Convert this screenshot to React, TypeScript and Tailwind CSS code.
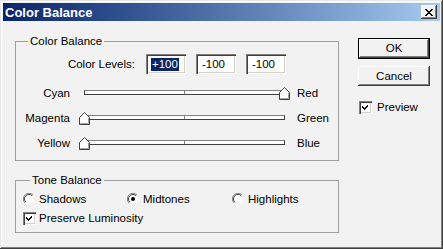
import type { ReactNode } from "react";

const FONT = "font-['Liberation_Sans',Arial,sans-serif]";

// ── small classic-windows widgets ───────────────────────────────────────────
function CloseGlyph() {
  return (
    <svg width="8" height="7" viewBox="0 0 8 7" shapeRendering="crispEdges">
      <path d="M0 0h2v1h-2zM6 0h2v1h-2zM1 1h2v1h-2zM5 1h2v1h-2zM2 2h4v1h-4zM3 3h2v1h-2zM2 4h4v1h-4zM1 5h2v1h-2zM5 5h2v1h-2zM0 6h2v1h-2zM6 6h2v1h-2z" fill="#000" />
    </svg>
  );
}

function Radio({ checked }: { checked?: boolean }) {
  return (
    <svg width="12" height="12" viewBox="0 0 12 12" className="shrink-0">
      <circle cx="6" cy="6" r="5" fill="#fff" />
      <path d="M10 2 A5.5 5.5 0 0 0 2 10" fill="none" stroke="#808080" strokeWidth="1" />
      <path d="M9.2 2.8 A4.5 4.5 0 0 0 2.8 9.2" fill="none" stroke="#404040" strokeWidth="1" />
      {checked && <circle cx="6" cy="6" r="2" fill="#000" />}
    </svg>
  );
}

function Check({ checked }: { checked?: boolean }) {
  return (
    <div className="flex h-[13px] w-[13px] shrink-0 items-center justify-center bg-white shadow-[inset_1px_1px_0_#808080,inset_2px_2px_0_#404040,inset_-1px_-1px_0_#ffffff,inset_-2px_-2px_0_#d4d0c8]">
      {checked && (
        <svg width="7" height="7" viewBox="0 0 7 7" shapeRendering="crispEdges">
          <path d="M6 0v3h-1v1h-1v1h-1v1h-1v-1h-1v-1h-1v-2h1v1h1v1h1v-1h1v-1h1v-1z" fill="#000" />
        </svg>
      )}
    </div>
  );
}

function Button({ children, isDefault }: { children: ReactNode; isDefault?: boolean }) {
  return (
    <div
      className={
        isDefault
          ? "flex h-[21px] w-[72px] items-center justify-center border border-black shadow-[inset_-1px_-1px_0_#404040,inset_1px_1px_0_#ffffff,inset_-2px_-2px_0_#808080]"
          : "flex h-[20px] w-[72px] items-center justify-center shadow-[inset_-1px_-1px_0_#404040,inset_1px_1px_0_#ffffff,inset_-2px_-2px_0_#808080]"
      }
    >
      {children}
    </div>
  );
}

function LevelInput({ value, selected }: { value: string; selected?: boolean }) {
  return (
    <div className="flex h-[20px] w-[40px] items-center bg-white pl-[5px] shadow-[inset_1px_1px_0_#808080,inset_2px_2px_0_#404040,inset_-1px_-1px_0_#ffffff,inset_-2px_-2px_0_#d4d0c8]">
      <span className={selected ? "bg-[#0a246a] px-px text-white" : "px-px"}>{value}</span>
    </div>
  );
}

function Slider({ left, right, value }: { left: string; right: string; value: number }) {
  const offset = ((value + 100) / 200) * 200;
  return (
    <div className="flex h-[25px] items-center">
      <div className="w-[54px] text-right">{left}</div>
      <div className="relative ml-[14px] h-[13px] w-[201px]">
        <div className="mt-[3px] flex h-[5px] w-full justify-center border border-[#404040] border-t-[#808080] bg-white">
          <div className="h-full w-px bg-[#808080]" />
        </div>
        <svg width="11" height="13" viewBox="0 0 11 13" className="absolute top-0" style={{ left: offset - 5 }}>
          <path d="M0.5 5.5 L5.5 0.5 L10.5 5.5 L10.5 12.5 L0.5 12.5 Z" fill="#fff" stroke="#404040" />
          <path d="M1.5 11.5 L9.5 11.5 L9.5 6" fill="none" stroke="#a0a0a0" />
        </svg>
      </div>
      <div className="ml-[12px]">{right}</div>
    </div>
  );
}

export default function App() {
  return (
    <div className={`${FONT} flex h-[249px] w-[443px] flex-col bg-[#f2f2f2] p-[3px] text-[11.5px] leading-[13px] text-black shadow-[inset_-1px_-1px_0_#404040,inset_1px_1px_0_#e6e6e6,inset_-2px_-2px_0_#808080,inset_2px_2px_0_#ffffff]`}>
      {/* title bar */}
      <div className="flex h-[18px] items-center justify-between bg-linear-to-r from-[#0a246a] to-[#a6caf0] pl-[2px] pr-[3px]">
        <span className="text-[13px] font-bold text-white">Color Balance</span>
        <div className="flex h-[14px] w-[16px] items-center justify-center bg-[#f2f2f2] shadow-[inset_-1px_-1px_0_#404040,inset_1px_1px_0_#ffffff,inset_-2px_-2px_0_#808080]">
          <CloseGlyph />
        </div>
      </div>

      <div className="flex">
        {/* left column */}
        <div className="ml-[12px] flex w-[324px] flex-col">
          <fieldset className="mt-[14px] h-[126px] border border-[#a0a0a0]">
            <legend className="ml-[12px] px-[2px]">Color Balance</legend>
            <div className="mt-[6px] flex h-[20px] items-center">
              <div className="w-[119px] text-right">Color Levels:</div>
              <div className="ml-[11px] flex gap-[10px]">
                <LevelInput value="+100" selected />
                <LevelInput value="-100" />
                <LevelInput value="-100" />
              </div>
            </div>
            <div className="mt-[7px] flex flex-col">
              <Slider left="Cyan" right="Red" value={100} />
              <Slider left="Magenta" right="Green" value={-100} />
              <Slider left="Yellow" right="Blue" value={-100} />
            </div>
          </fieldset>

          <fieldset className="mt-[13px] h-[59px] border border-[#a0a0a0]">
            <legend className="ml-[14px] px-[2px]">Tone Balance</legend>
            <div className="mt-[5px] flex h-[14px] items-center pl-[7px]">
              <label className="flex w-[104px] items-center gap-[4px]"><Radio /> Shadows</label>
              <label className="flex w-[105px] items-center gap-[4px]"><Radio checked /> Midtones</label>
              <label className="flex items-center gap-[4px]"><Radio /> Highlights</label>
            </div>
            <div className="mt-[6px] flex h-[13px] items-center gap-[3px] pl-[7px]">
              <Check checked />
              <span>Preserve Luminosity</span>
            </div>
          </fieldset>
        </div>

        {/* right column */}
        <div className="ml-[19px] flex flex-col">
          <div className="mt-[17px]">
            <Button isDefault>OK</Button>
          </div>
          <div className="mt-[7px]">
            <Button>Cancel</Button>
          </div>
          <div className="mt-[15px] flex items-center gap-[5px] pl-px">
            <Check checked />
            <span>Preview</span>
          </div>
        </div>
      </div>
    </div>
  );
}
